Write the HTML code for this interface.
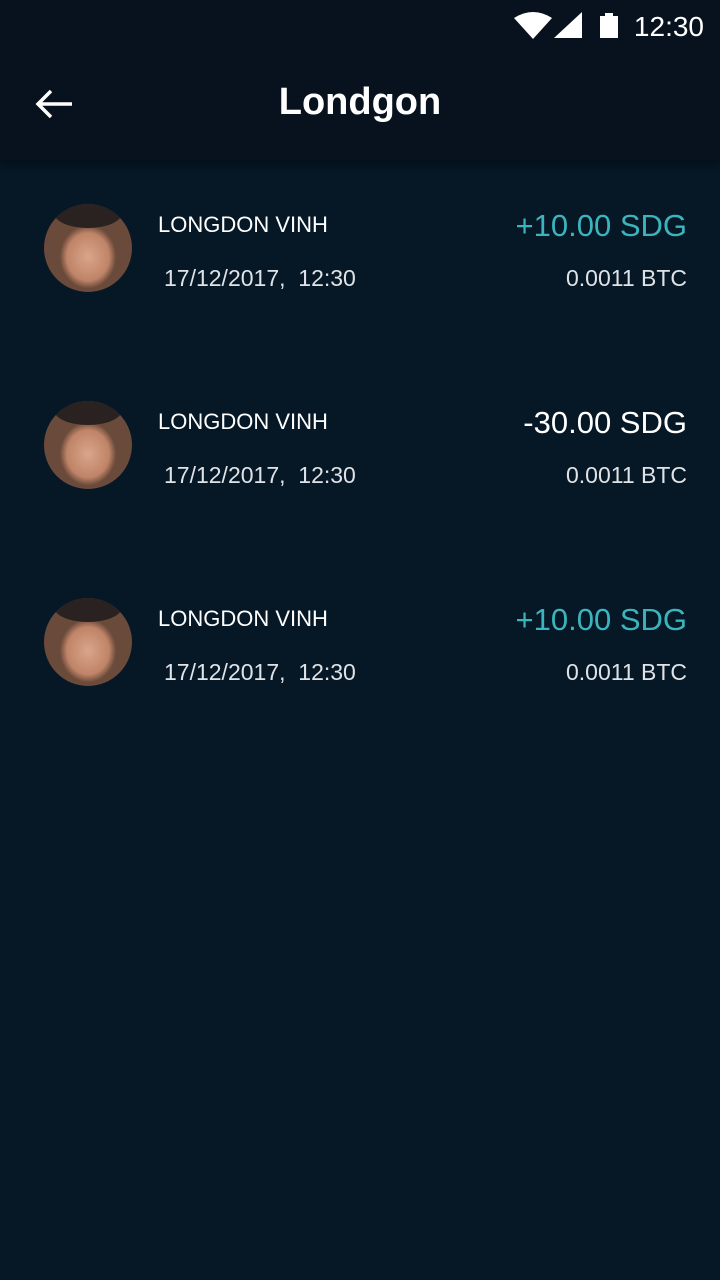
<!DOCTYPE html>
<html><head><meta charset="utf-8"><style>
body{margin:0;width:720px;height:1280px;background:#061725;font-family:"Liberation Sans",sans-serif;color:#fff;overflow:hidden;position:relative}
.hdr{position:absolute;left:0;top:0;width:720px;height:160px;background:#08121e;box-shadow:0 4px 8px rgba(0,0,0,.35)}
.time{position:absolute;right:16px;top:11px;font-size:28px}
.title{position:absolute;left:0;width:720px;top:81px;text-align:center;font-size:38px;font-weight:bold}
.row{position:absolute;left:0;width:720px;height:120px}
.av{position:absolute;left:44px;top:0;width:88px;height:88px;border-radius:50%;background:radial-gradient(ellipse 40% 45% at 50% 60%,#d9a58a 0,#c08468 60%,#6a4a3a 80%),#4a3a30;overflow:hidden}
.av:before{content:"";position:absolute;left:10px;top:-6px;width:68px;height:30px;border-radius:50%;background:#2a2220}
.name{position:absolute;left:158px;top:8px;font-size:22px}
.date{position:absolute;left:164px;top:61px;font-size:23px;color:#dfe3e7}
.amt{position:absolute;right:33px;top:4px;font-size:31px}
.btc{position:absolute;right:33px;top:61px;font-size:23px;color:#dfe3e7}
.t{color:#3bb5bd}
</style></head><body>
<div class="hdr">
<svg style="position:absolute;left:514px;top:12px" width="110" height="28">
<path d="M0 6 Q19 -6 38 6 L19 27 Z" fill="#fff"/>
<path d="M40 26 L68 26 L68 0 Z" fill="#fff"/>
<rect x="86" y="4" width="18" height="22" fill="#fff"/><rect x="91" y="1" width="8" height="4" fill="#fff"/>
</svg>
<div class="time">12:30</div>
<svg style="position:absolute;left:34px;top:88px" width="40" height="32"><path d="M38 16 H4 M17 3 L4 16 L17 29" stroke="#fff" stroke-width="3.5" fill="none"/></svg>
<div class="title">Londgon</div>
</div>
<div class="row" style="top:204px"><div class="av"></div><div class="name">LONGDON VINH</div><div class="date">17/12/2017,&nbsp; 12:30</div><div class="amt t">+10.00 SDG</div><div class="btc">0.0011 BTC</div></div>
<div class="row" style="top:401px"><div class="av"></div><div class="name">LONGDON VINH</div><div class="date">17/12/2017,&nbsp; 12:30</div><div class="amt">-30.00 SDG</div><div class="btc">0.0011 BTC</div></div>
<div class="row" style="top:598px"><div class="av"></div><div class="name">LONGDON VINH</div><div class="date">17/12/2017,&nbsp; 12:30</div><div class="amt t">+10.00 SDG</div><div class="btc">0.0011 BTC</div></div>
</body></html>
